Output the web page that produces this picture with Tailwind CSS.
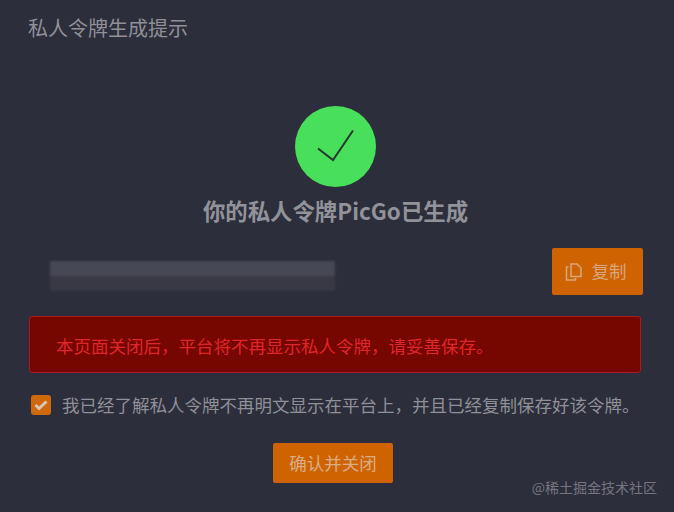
<!DOCTYPE html>
<html lang="zh-CN">
<head>
<meta charset="UTF-8">
<script src="https://cdn.jsdelivr.net/npm/@tailwindcss/browser@4"></script>
<title>私人令牌生成提示</title>
</head>
<body class="bg-[#2c2e3b] font-['Noto_Sans_CJK_SC','Liberation_Sans',sans-serif] overflow-hidden">
<div class="relative w-[674px] h-[512px] flex flex-col">
  <h2 class="pl-[28px] pt-[14px] text-[20px] leading-[28px] font-normal text-[#8f9098]">私人令牌生成提示</h2>

  <div class="mt-[64px] pr-[3px] flex flex-col items-center">
    <div class="w-[81px] h-[81px] rounded-full bg-[#48df5b] flex items-center justify-center">
      <svg width="81" height="81" viewBox="0 0 81 81" fill="none">
        <path d="M23 42.5L38 54L58 24.500" stroke="#24392f" stroke-width="2"/>
      </svg>
    </div>
    <h3 class="mt-[7px] text-[22.400px] leading-[32px] font-bold text-[#91929a]">你的私人令牌PicGo已生成</h3>
  </div>

  <div class="mt-[22px] ml-[50px] mr-[31px] flex items-center justify-between h-[47px]">
    <div class="w-[285px] mt-[9px] flex flex-col blur-[1px]">
      <div class="h-[15px] bg-[#474855]"></div>
      <div class="h-[15px] bg-[#383944]"></div>
    </div>
    <button class="w-[91px] h-[47px] rounded-[2px] bg-[#cf6300] flex items-center justify-center gap-[10px] pr-[4px] text-[17.500px] text-[#d7a77b]">
      <svg width="17" height="18" viewBox="0 0 17 18" fill="none" stroke="#d7a77b" stroke-width="1.500">
        <path d="M6 1h6l4 4v8.500H6z"/>
        <path d="M3.500 4H1.500v13h9v-2"/>
      </svg>
      <span>复制</span>
    </button>
  </div>

  <div class="mt-[21px] mx-[29px] mr-[33px] h-[57px] rounded-[3px] border border-[#a81c1c] bg-[#750600] pl-[26px] pt-[4px] flex items-center text-[17.500px] text-[#e0252a]">本页面关闭后，平台将不再显示私人令牌，请妥善保存。</div>

  <label class="mt-[20px] ml-[31px] flex items-center gap-[11px] text-[17.500px] leading-[24px] text-[#8f9098] whitespace-nowrap">
    <span class="w-[20px] h-[20px] rounded-[3px] bg-[#d0680c] flex items-center justify-center shrink-0">
      <svg width="14" height="12" viewBox="0 0 14 12" fill="none">
        <path d="M1.500 6l3.500 3.500L12.500 2.500" stroke="#d9c6b4" stroke-width="3"/>
      </svg>
    </span>
    <span>我已经了解私人令牌不再明文显示在平台上，并且已经复制保存好该令牌。</span>
  </label>

  <div class="mt-[26px] flex justify-center pr-[8px]">
    <button class="w-[120px] h-[40px] rounded-[2px] bg-[#cf6300] text-[17.500px] text-[#d9ad85]">确认并关闭</button>
  </div>

  <span class="absolute right-[17px] top-[477px] text-[14px] leading-[20px] text-[#74757f]">@稀土掘金技术社区</span>
</div>
</body>
</html>
